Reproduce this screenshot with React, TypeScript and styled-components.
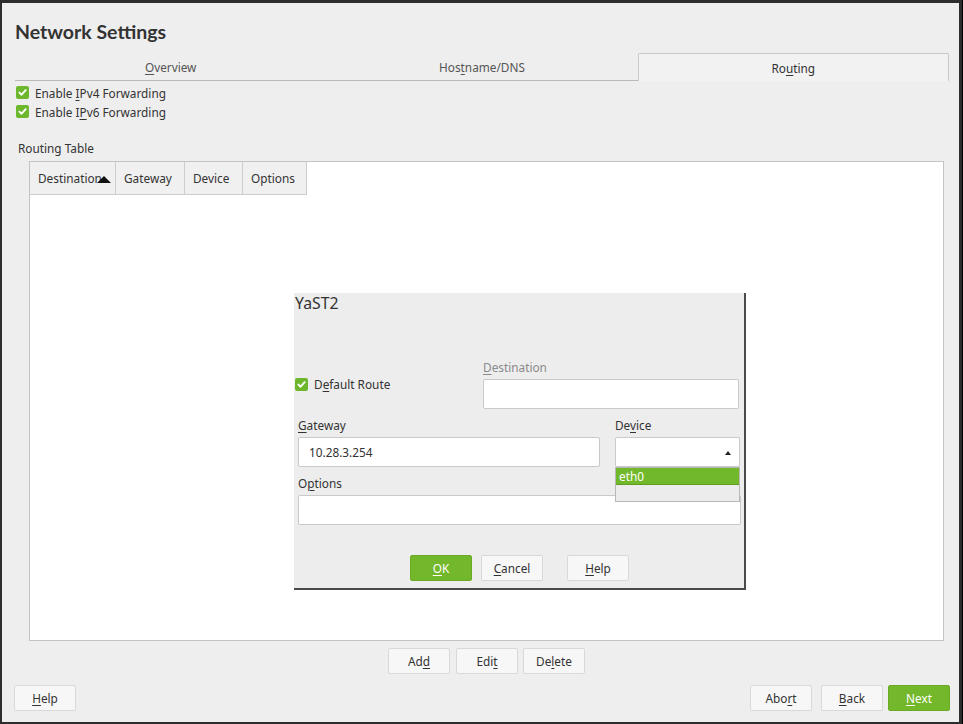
import React from "react";
import styled, { createGlobalStyle } from "styled-components";

const GlobalStyle = createGlobalStyle`
  html, body { margin: 0; padding: 0; }
  body {
    background: #2d2d2d;
    font-family: "Noto Sans", "Open Sans", sans-serif;
    color: #333;
  }
  u { text-decoration: underline; text-underline-offset: 2px; }
`;

const FS = "11.8px";

const Frame = styled.div`
  width: 963px;
  height: 724px;
  box-sizing: border-box;
  padding: 3px 3px 2px 2px;
  background: #2d2d2d;
  border-right: 1px solid #000;
`;

const Win = styled.div`
  height: 100%;
  background: #eeeeee;
  box-sizing: border-box;
  padding: 0 10px 0 13px;
  display: flex;
  flex-direction: column;
`;

const Title = styled.h1`
  margin: 0;
  height: 50px;
  box-sizing: border-box;
  padding-top: 15px;
  font-family: "Lato", "Open Sans", sans-serif;
  font-size: 19.5px;
  line-height: 28px;
  font-weight: 700;
  color: #333;
`;

const TabBar = styled.div`
  display: grid;
  grid-template-columns: 1fr 1fr 1fr;
  height: 28px;
`;

const Tab = styled.div<{ $active?: boolean }>`
  display: flex;
  align-items: center;
  justify-content: center;
  font-size: ${FS};
  box-sizing: border-box;
  color: ${(p) => (p.$active ? "#333" : "#555")};
  background: ${(p) => (p.$active ? "#f2f2f2" : "transparent")};
  border: ${(p) => (p.$active ? "1px solid #c9c9c9" : "none")};
  border-bottom: ${(p) => (p.$active ? "none" : "1px solid #b9b9b9")};
  border-radius: ${(p) => (p.$active ? "2px 2px 0 0" : "0")};
  padding-top: 1px;
`;

const CheckList = styled.div`
  display: flex;
  flex-direction: column;
  padding-top: 2px;
  padding-left: 1px;
`;

const CheckRow = styled.label`
  display: flex;
  align-items: center;
  gap: 6px;
  height: 19px;
  font-size: ${FS};
  color: #333;
`;

const Box = styled.span`
  width: 13px;
  height: 13px;
  border-radius: 2px;
  background: #6db72c;
  display: inline-flex;
  align-items: center;
  justify-content: center;
  flex: none;
`;

const Check = () => (
  <Box>
    <svg width="9" height="9" viewBox="0 0 9 9">
      <path d="M1.4 4.6 L3.6 6.7 L7.7 2.2" fill="none" stroke="#fff" strokeWidth="1.9" strokeLinecap="round" strokeLinejoin="round" />
    </svg>
  </Box>
);

const SectionLabel = styled.div`
  margin-top: 18px;
  padding-left: 3px;
  font-size: ${FS};
  line-height: 18px;
  color: #333;
`;

const Table = styled.div`
  position: relative;
  margin: 4px 5px 0 14px;
  height: 480px;
  background: #fff;
  border: 1px solid #c4c4c4;
  box-sizing: border-box;
`;

const HeaderRow = styled.div`
  display: flex;
  height: 33px;
`;

const HeadCell = styled.div<{ $w: number }>`
  position: relative;
  width: ${(p) => p.$w}px;
  box-sizing: border-box;
  padding-left: 8px;
  padding-bottom: 1px;
  display: flex;
  align-items: center;
  font-size: ${FS};
  color: #333;
  background: #f0f0f0;
  border-right: 1px solid #cdcdcd;
  border-bottom: 1px solid #cdcdcd;
  white-space: nowrap;
`;

const SortArrow = styled.span`
  position: absolute;
  right: 4px;
  top: 14px;
  width: 0;
  height: 0;
  border-left: 7px solid transparent;
  border-right: 7px solid transparent;
  border-bottom: 7px solid #111;
`;

const Dialog = styled.div`
  position: absolute;
  left: 264px;
  top: 131px;
  width: 450px;
  height: 295px;
  background: #ededed;
  box-shadow: 2px 0 0 #4a4a4a, 0 2px 0 #4a4a4a, 2px 2px 0 #4a4a4a;
  display: flex;
  flex-direction: column;
`;

const DialogTitle = styled.div`
  padding-left: 1px;
  font-size: 15.8px;
  line-height: 20px;
  color: #333;
  height: 66px;
`;

const TopRow = styled.div`
  display: flex;
  align-items: flex-end;
`;

const DefaultCheck = styled.label`
  display: flex;
  align-items: center;
  gap: 6px;
  width: 189px;
  padding-left: 1px;
  box-sizing: border-box;
  height: 20px;
  margin-bottom: 15px;
  font-size: ${FS};
  color: #333;
`;

const Field = styled.div<{ $w: number }>`
  width: ${(p) => p.$w}px;
  display: flex;
  flex-direction: column;
`;

const FieldLabel = styled.div<{ $disabled?: boolean }>`
  font-size: ${FS};
  line-height: 16px;
  height: 20px;
  color: ${(p) => (p.$disabled ? "#8a8a8a" : "#333")};
`;

const Input = styled.div`
  height: 30px;
  box-sizing: border-box;
  background: #fff;
  border: 1px solid #c9c9c9;
  border-radius: 2px;
  padding-left: 10px;
  display: flex;
  align-items: center;
  font-size: ${FS};
  color: #333;
`;

const Row = styled.div`
  display: flex;
  gap: 15px;
  padding-left: 4px;
  margin-top: 8px;
`;

const Combo = styled.div`
  position: relative;
  height: 30px;
  box-sizing: border-box;
  background: #fff;
  border: 1px solid #c9c9c9;
  border-radius: 2px;
`;

const ComboArrow = styled.span`
  position: absolute;
  right: 8px;
  top: 13px;
  width: 0;
  height: 0;
  border-left: 3.5px solid transparent;
  border-right: 3.5px solid transparent;
  border-bottom: 4px solid #222;
`;

const Popup = styled.div`
  position: absolute;
  left: -1px;
  right: -1px;
  top: 29px;
  background: #ececec;
  border: 1px solid #b8b8b8;
  z-index: 2;
`;

const PopupItem = styled.div<{ $selected?: boolean }>`
  height: 16px;
  line-height: 16px;
  padding-left: 3px;
  font-size: ${FS};
  color: ${(p) => (p.$selected ? "#fff" : "#333")};
  background: ${(p) => (p.$selected ? "#72b82b" : "transparent")};
  border-bottom: ${(p) => (p.$selected ? "1px solid #5e9c22" : "none")};
`;

const PopupBlank = styled.div`
  height: 16px;
`;

const Button = styled.button<{ $primary?: boolean; $ml?: number }>`
  width: 62px;
  height: 26px;
  padding: 0;
  margin-left: ${(p) => p.$ml ?? 0}px;
  box-sizing: border-box;
  border-radius: 2px;
  font-family: inherit;
  font-size: ${FS};
  color: ${(p) => (p.$primary ? "#fff" : "#333")};
  background: ${(p) => (p.$primary ? "#73b82b" : "#f7f7f7")};
  border: 1px solid ${(p) => (p.$primary ? "#6aab26" : "#d9d9d9")};
`;

const DialogButtons = styled.div`
  display: flex;
  align-items: center;
  margin-top: 30px;
  padding-left: 116px;
`;

const TableButtons = styled.div`
  display: flex;
  align-items: center;
  margin-top: 7px;
  padding-left: 373px;
`;

const Bottom = styled.div`
  display: flex;
  align-items: center;
  justify-content: space-between;
  margin-top: 11px;
  margin-right: -1px;
`;

const RightButtons = styled.div`
  display: flex;
`;

export default function App() {
  return (
    <>
      <GlobalStyle />
      <Frame>
        <Win>
          <Title>Network Settings</Title>
          <TabBar>
            <Tab><span><u>O</u>verview</span></Tab>
            <Tab><span>Hos<u>t</u>name/DNS</span></Tab>
            <Tab $active><span>Ro<u>u</u>ting</span></Tab>
          </TabBar>
          <CheckList>
            <CheckRow><Check /><span>Enable <u>I</u>Pv4 Forwarding</span></CheckRow>
            <CheckRow><Check /><span>Enable I<u>P</u>v6 Forwarding</span></CheckRow>
          </CheckList>
          <SectionLabel>Routing Table</SectionLabel>
          <Table>
            <HeaderRow>
              <HeadCell $w={86}>Destination<SortArrow /></HeadCell>
              <HeadCell $w={69}>Gateway</HeadCell>
              <HeadCell $w={58}>Device</HeadCell>
              <HeadCell $w={64}>Options</HeadCell>
            </HeaderRow>
            <Dialog>
              <DialogTitle>YaST2</DialogTitle>
              <TopRow>
                <DefaultCheck><Check /><span>D<u>e</u>fault Route</span></DefaultCheck>
                <Field $w={256}>
                  <FieldLabel $disabled><u>D</u>estination</FieldLabel>
                  <Input />
                </Field>
              </TopRow>
              <Row>
                <Field $w={302}>
                  <FieldLabel><u>G</u>ateway</FieldLabel>
                  <Input>10.28.3.254</Input>
                </Field>
                <Field $w={125}>
                  <FieldLabel>De<u>v</u>ice</FieldLabel>
                  <Combo>
                    <ComboArrow />
                    <Popup>
                      <PopupItem $selected>eth0</PopupItem>
                      <PopupBlank />
                    </Popup>
                  </Combo>
                </Field>
              </Row>
              <Row>
                <Field $w={443}>
                  <FieldLabel>O<u>p</u>tions</FieldLabel>
                  <Input />
                </Field>
              </Row>
              <DialogButtons>
                <Button $primary><u>O</u>K</Button>
                <Button $ml={9}><u>C</u>ancel</Button>
                <Button $ml={24}><u>H</u>elp</Button>
              </DialogButtons>
            </Dialog>
          </Table>
          <TableButtons>
            <Button>Ad<u>d</u></Button>
            <Button $ml={6}>Edi<u>t</u></Button>
            <Button $ml={5}>De<u>l</u>ete</Button>
          </TableButtons>
          <Bottom>
            <Button $ml={-1}><u>H</u>elp</Button>
            <RightButtons>
              <Button>Abo<u>r</u>t</Button>
              <Button $ml={9}><u>B</u>ack</Button>
              <Button $ml={5} $primary><u>N</u>ext</Button>
            </RightButtons>
          </Bottom>
        </Win>
      </Frame>
    </>
  );
}
